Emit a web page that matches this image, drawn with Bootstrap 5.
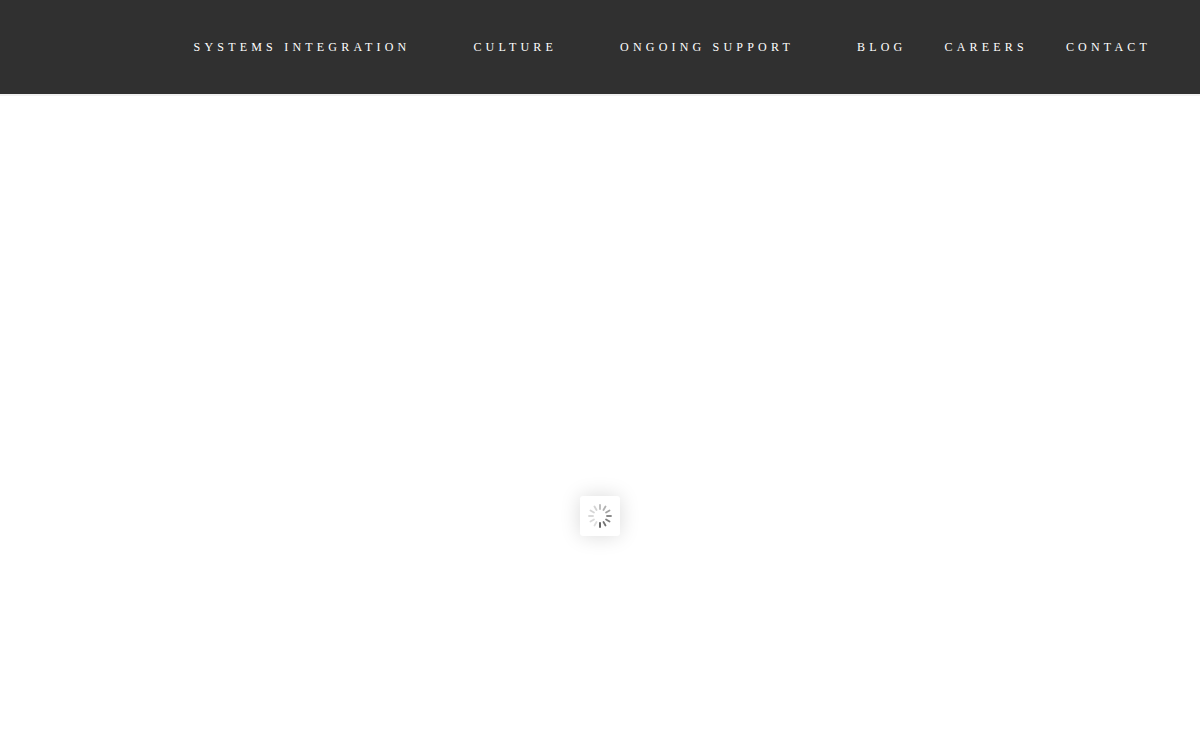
<!DOCTYPE html>
<html lang="en">
<head>
<meta charset="utf-8">
<meta name="viewport" content="width=device-width, initial-scale=1">
<title>Systems Integration</title>
<link href="https://cdn.jsdelivr.net/npm/bootstrap@5.3.0/dist/css/bootstrap.min.css" rel="stylesheet">
<style>
body { font-family: "Liberation Serif", serif; background: #fff; }
.site-header { background: #303030; min-height: 94px; padding: 0 49px; box-shadow: 0 2px 0 #f2f2f2; }
.site-nav .nav-link { color: #fff; font-size: 12px; line-height: 18px; letter-spacing: .35em; text-transform: uppercase; padding: 0; }
.site-nav { column-gap: 38px; }
.site-nav .has-menu { padding-right: 25px; }
.loader-box { width: 40px; height: 40px; background: #fff; border-radius: 3px; box-shadow: 0 0 20px rgba(0,0,0,.15); }
.slider-area { padding-top: 188px; }
</style>
</head>
<body class="min-vh-100 d-flex flex-column">
<header class="site-header d-flex align-items-center">
<nav class="ms-auto" aria-label="Main">
<ul class="site-nav nav flex-nowrap">
<li class="nav-item has-menu"><a class="nav-link" href="#">Systems Integration</a></li>
<li class="nav-item has-menu"><a class="nav-link" href="#">Culture</a></li>
<li class="nav-item has-menu"><a class="nav-link" href="#">Ongoing Support</a></li>
<li class="nav-item"><a class="nav-link" href="#">Blog</a></li>
<li class="nav-item"><a class="nav-link" href="#">Careers</a></li>
<li class="nav-item"><a class="nav-link" href="#">Contact</a></li>
</ul>
</nav>
</header>
<main class="slider-area flex-grow-1 d-flex justify-content-center align-items-center">
<div class="loader-box d-flex align-items-center justify-content-center" role="status" aria-label="Loading">
<svg width="24" height="24" viewBox="-12 -12 24 24" stroke="#000" stroke-width="1.8" stroke-linecap="round" aria-hidden="true">
<path d="M0-11V-7" opacity=".27"/>
<path d="M0-11V-7" opacity=".3" transform="rotate(30)"/>
<path d="M0-11V-7" opacity=".36" transform="rotate(60)"/>
<path d="M0-11V-7" opacity=".45" transform="rotate(90)"/>
<path d="M0-11V-7" opacity=".5" transform="rotate(120)"/>
<path d="M0-11V-7" opacity=".55" transform="rotate(150)"/>
<path d="M0-11V-7" opacity=".65" transform="rotate(180)"/>
<path d="M0-11V-7" opacity=".13" transform="rotate(210)"/>
<path d="M0-11V-7" opacity=".14" transform="rotate(240)"/>
<path d="M0-11V-7" opacity=".15" transform="rotate(270)"/>
<path d="M0-11V-7" opacity=".16" transform="rotate(300)"/>
<path d="M0-11V-7" opacity=".17" transform="rotate(330)"/>
</svg>
</div>
</main>
<script src="https://cdn.jsdelivr.net/npm/bootstrap@5.3.0/dist/js/bootstrap.bundle.min.js"></script>
</body>
</html>
